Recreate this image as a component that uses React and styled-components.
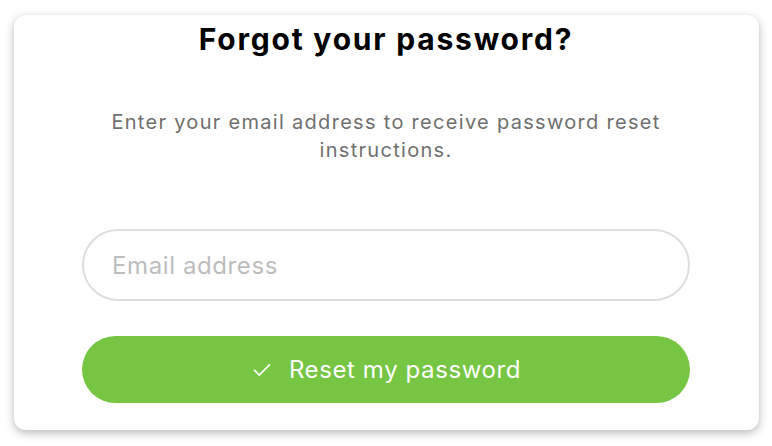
import React, { useState } from "react";
import styled, { createGlobalStyle } from "styled-components";

const GlobalStyle = createGlobalStyle`
  html, body {
    margin: 0;
    padding: 0;
    background: #ffffff;
  }

  body {
    font-family: Inter, "Open Sans", "Liberation Sans", sans-serif;
    -webkit-font-smoothing: antialiased;
  }
`;

const App = () => {
  const [email, setEmail] = useState("");

  return (
    <>
      <GlobalStyle />
      <Page>
        <Card>
          <Title>Forgot your password?</Title>
          <Description>
            Enter your email address to receive password reset instructions.
          </Description>
          <Form onSubmit={(e) => e.preventDefault()}>
            <EmailInput
              type="email"
              placeholder="Email address"
              value={email}
              onChange={(e) => setEmail(e.target.value)}
            />
            <SubmitButton type="submit">
              <svg
                xmlns="http://www.w3.org/2000/svg"
                fill="none"
                viewBox="0 0 24 24"
                strokeWidth={1.9}
                stroke="currentColor"
              >
                <path
                  strokeLinecap="square"
                  strokeLinejoin="miter"
                  d="M4 12.5l5 5L20 6.5"
                />
              </svg>
              Reset my password
            </SubmitButton>
          </Form>
        </Card>
      </Page>
    </>
  );
};

const Page = styled.div`
  padding: 15px 14px 16px 14px;
`;

const Card = styled.div`
  box-sizing: border-box;
  width: 745px;
  height: 415px;
  background: #ffffff;
  border-radius: 12px;
  box-shadow: 0 3px 10px rgba(0, 0, 0, 0.28);
  display: flex;
  flex-direction: column;
  align-items: center;
  padding: 6px 69px 0 68px;
`;

const Title = styled.h1`
  margin: 0;
  font-size: 30px;
  line-height: 36px;
  font-weight: 700;
  color: #000000;
  letter-spacing: 1.8px;
`;

const Description = styled.p`
  margin: 51px 0 0 0;
  max-width: 600px;
  text-align: center;
  font-size: 20px;
  line-height: 28px;
  color: #6f6f6f;
  font-weight: 400;
  letter-spacing: 1.3px;
`;

const Form = styled.form`
  width: 100%;
  display: flex;
  flex-direction: column;
  gap: 35px;
  margin-top: 65px;
`;

const EmailInput = styled.input`
  box-sizing: border-box;
  width: 100%;
  height: 72px;
  border: 2.5px solid #dedede;
  border-radius: 36px;
  padding: 0 28px;
  font-family: inherit;
  font-size: 24px;
  letter-spacing: 0.6px;
  color: #333;
  outline: none;

  &::placeholder {
    color: #bdbdbd;
  }
`;

const SubmitButton = styled.button`
  box-sizing: border-box;
  width: 100%;
  height: 67px;
  border: none;
  border-radius: 34px;
  background: #76c644;
  color: #ffffff;
  font-family: inherit;
  font-size: 24px;
  font-weight: 400;
  letter-spacing: 0.6px;
  display: flex;
  align-items: center;
  justify-content: center;
  gap: 16px;
  cursor: pointer;

  svg {
    width: 22px;
    height: 22px;
  }
`;

export default App;
